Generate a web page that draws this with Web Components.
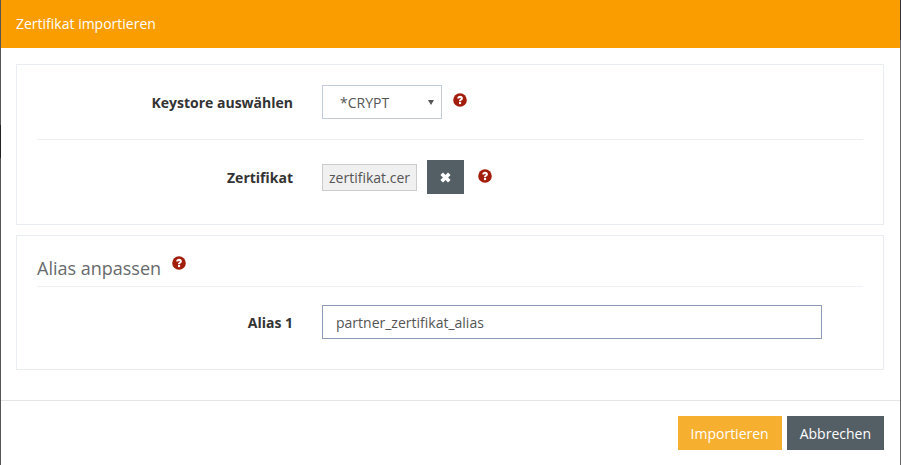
<!DOCTYPE html>
<html lang="de">
<head>
<meta charset="utf-8">
<title>Zertifikat importieren</title>
<style>
  html, body { margin: 0; height: 100%; }
  body {
    font-family: "Open Sans", sans-serif; font-size: 14px; color: #555; overflow: hidden;
    /* the dimmed page shows 1px left and right of the dialog */
    background:
      linear-gradient(#555 0 125px, #222 125px 158px, #555 158px) left / 1px 100% no-repeat,
      linear-gradient(#333 0 40px, #666 40px) right / 1px 100% no-repeat;
  }
</style>
</head>
<body>
<import-dialog>
  <span slot="title">Zertifikat importieren</span>

  <form-panel>
    <form-row label="Keystore auswählen">
      <fake-select value="*CRYPT"></fake-select>
      <help-icon style="margin-left: 11px; margin-top: -5px"></help-icon>
    </form-row>
    <hr-line></hr-line>
    <form-row label="Zertifikat" style="margin-top: 20px; margin-bottom: 10px">
      <file-tag>zertifikat.cer</file-tag>
      <dark-button icon style="margin-left: 10px"></dark-button>
      <help-icon style="margin-left: 14px; margin-top: -2px"></help-icon>
    </form-row>
  </form-panel>

  <form-panel heading="Alias anpassen">
    <form-row label="Alias 1">
      <text-box value="partner_zertifikat_alias"></text-box>
    </form-row>
  </form-panel>

  <dark-button slot="footer" primary>Importieren</dark-button>
  <dark-button slot="footer">Abbrechen</dark-button>
</import-dialog>

<script>
class ImportDialog extends HTMLElement {
  constructor() {
    super();
    this.attachShadow({ mode: 'open' }).innerHTML = `
      <style>
        :host { display: flex; flex-direction: column; height: 465px; margin: 0 1px; background: #fff; }
        header { height: 48px; box-sizing: border-box; padding: 14px 15px 0; background: #fa9d00; color: #fff; line-height: 20px; }
        main { flex: none; height: 353px; box-sizing: border-box; padding: 16px 15px 0; display: flex; flex-direction: column; gap: 10px; border-bottom: 1px solid #e5e5e5; }
        footer { display: flex; justify-content: flex-end; gap: 5px; padding: 15px 16px 0 15px; }
      </style>
      <header><slot name="title"></slot></header>
      <main><slot></slot></main>
      <footer><slot name="footer"></slot></footer>
    `;
  }
}

class FormPanel extends HTMLElement {
  constructor() {
    super();
    const heading = this.getAttribute('heading');
    this.attachShadow({ mode: 'open' }).innerHTML = `
      <style>
        :host { display: block; box-sizing: border-box; width: 868px; border: 1px solid #e9edf2; padding: 20px; }
        :host([heading]) { height: 135px; padding-top: 16px; }
        h2 { display: flex; margin: 0 0 18px; height: 35px; box-sizing: border-box; font-weight: 400; font-size: 18px; line-height: 33px; color: #676a6c; border-bottom: 1px solid #eef0f5; }
        help-icon { margin: 4px 0 0 11px; }
      </style>
      ${heading ? `<h2>${heading}<help-icon></help-icon></h2>` : ''}
      <slot></slot>
    `;
  }
}

class FormRow extends HTMLElement {
  constructor() {
    super();
    this.attachShadow({ mode: 'open' }).innerHTML = `
      <style>
        :host { display: flex; align-items: center; }
        label { width: 256px; flex: none; text-align: right; font-weight: 700; color: #333; margin-right: 29px; }
      </style>
      <label>${this.getAttribute('label')}</label>
      <slot></slot>
    `;
  }
}

class HrLine extends HTMLElement {
  constructor() {
    super();
    this.attachShadow({ mode: 'open' }).innerHTML = `
      <style>:host { display: block; height: 1px; margin-top: 20px; background: #eeeeee; }</style>
    `;
  }
}

class FakeSelect extends HTMLElement {
  constructor() {
    super();
    this.attachShadow({ mode: 'open' }).innerHTML = `
      <style>
        :host { display: flex; align-items: center; justify-content: space-between; box-sizing: border-box; width: 120px; height: 34px; padding: 0 7px 0 17px; border: 1px solid #c2cbdb; color: #555; }
        i { width: 0; height: 0; border: 3px solid transparent; border-top: 5px solid #555; border-bottom: 0; }
      </style>
      <span>${this.getAttribute('value')}</span><i></i>
    `;
  }
}

class FileTag extends HTMLElement {
  constructor() {
    super();
    this.attachShadow({ mode: 'open' }).innerHTML = `
      <style>
        :host { display: block; box-sizing: border-box; height: 27px; padding: 0 6px; line-height: 25px; border: 1px solid #ccc; background: #f0f0f0; color: #555; }
      </style>
      <slot></slot>
    `;
  }
}

class TextBox extends HTMLElement {
  constructor() {
    super();
    this.attachShadow({ mode: 'open' }).innerHTML = `
      <style>
        :host { display: block; box-sizing: border-box; width: 500px; height: 34px; padding: 0 13px; line-height: 34px; border: 1px solid #8e9ab8; color: #555; }
      </style>
      ${this.getAttribute('value')}
    `;
  }
}

class DarkButton extends HTMLElement {
  constructor() {
    super();
    const cross = `<svg width="11" height="11" viewBox="0 0 11 11"><path d="M3 .4 5.5 2.9 8 .4 10.6 3 8.1 5.5 10.6 8 8 10.6 5.5 8.1 3 10.6 .4 8 2.9 5.5 .4 3Z" fill="#fff"/></svg>`;
    this.attachShadow({ mode: 'open' }).innerHTML = `
      <style>
        :host { display: flex; align-items: center; justify-content: center; box-sizing: border-box; height: 34px; padding: 0 13px; background: #535e65; color: #fff; }
        :host([primary]) { background: #f7af30; }
        :host([icon]) { width: 37px; padding: 0; }
      </style>
      ${this.hasAttribute('icon') ? cross : '<slot></slot>'}
    `;
  }
}

class HelpIcon extends HTMLElement {
  constructor() {
    super();
    this.attachShadow({ mode: 'open' }).innerHTML = `
      <style>
        :host { display: block; width: 14px; height: 14px; flex: none; }
        svg { display: block; }
      </style>
      <svg width="14" height="14" viewBox="0 0 14 14">
        <circle cx="7" cy="7" r="6.8" fill="#a31d0b"/>
        <path d="M4.2 5.4C4.3 3.7 5.5 2.8 7.1 2.8 8.7 2.8 9.9 3.8 9.9 5.2 9.9 6.3 9.3 6.8 8.6 7.2 8.2 7.5 8.1 7.7 8.1 8.3H6C6 7.2 6.3 6.7 7.1 6.2 7.5 5.9 7.7 5.7 7.7 5.4 7.7 5 7.5 4.8 7.1 4.8 6.6 4.8 6.4 5 6.3 5.6Z" fill="#fff"/>
        <rect x="6" y="9" width="2.1" height="2.1" fill="#fff"/>
      </svg>
    `;
  }
}

customElements.define('import-dialog', ImportDialog);
customElements.define('form-panel', FormPanel);
customElements.define('form-row', FormRow);
customElements.define('hr-line', HrLine);
customElements.define('fake-select', FakeSelect);
customElements.define('file-tag', FileTag);
customElements.define('text-box', TextBox);
customElements.define('dark-button', DarkButton);
customElements.define('help-icon', HelpIcon);
</script>
</body>
</html>
